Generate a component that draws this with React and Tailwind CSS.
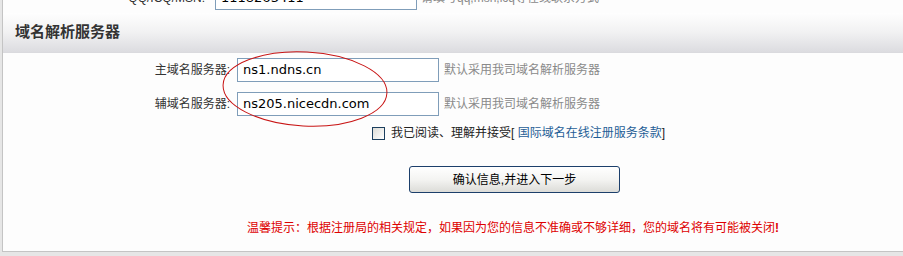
import React from "react";

const cjk = { fontFamily: '"Liberation Sans", "Noto Sans CJK SC", sans-serif' };

const Field = ({ label, value, hint }) => (
	<div className="flex items-center h-[24px]">
		<div className="w-[228px] text-right text-[12px] text-[#333] pr-[1px]">{label}</div>
		<div className="ml-[6px] w-[202px] h-[24px] border border-[#7f9db9] bg-white flex items-center pl-[5px] text-[13px] text-black" style={{ fontFamily: '"DejaVu Sans", sans-serif' }}>
			{value}
		</div>
		<div className="ml-[5px] text-[12px] text-[#8a8a8a]">{hint}</div>
	</div>
);

export default function App() {
	return (
		<div className="relative w-[903px] h-[256px] overflow-hidden bg-[#e6e6e6]" style={cjk}>
			<div className="ml-[2px] h-[252px] border-l border-b border-[#c4c4c4] bg-[#fdfdfd] flex flex-col">
				{/* previous row, cut off at top */}
				<div className="h-[13px] overflow-hidden">
					<div className="-mt-[14px] flex items-center h-[24px]">
						<div className="w-[202px] text-right text-[12px] text-[#333]">QQ/ICQ/MSN:</div>
						<div className="ml-[10px] w-[202px] h-[24px] border border-[#7f9db9] bg-white flex items-center pl-[5px] text-[13px]" style={{ fontFamily: '"DejaVu Sans", sans-serif' }}>
							1118263411
						</div>
						<div className="ml-[4px] text-[12px] text-[#8a8a8a]">请填写qq,msn,icq等在线联系方式</div>
					</div>
				</div>

				<div className="h-[40px] flex items-center pl-[12px] bg-gradient-to-b from-[#fefefe] via-[#f1f1f2] to-[#dcdce0] border-b border-[#dadade]">
					<span className="text-[15px] font-bold text-[#333]">域名解析服务器</span>
				</div>

				<div className="flex flex-col pt-[5px]">
					<Field label="主域名服务器:" value="ns1.ndns.cn" hint="默认采用我司域名解析服务器" />
					<div className="h-[10px]" />
					<Field label="辅域名服务器:" value="ns205.nicecdn.com" hint="默认采用我司域名解析服务器" />

					<div className="flex items-center mt-[10px] pl-[369px] h-[14px] text-[12px] text-[#222]">
						<span className="w-[13px] h-[13px] border border-[#1c3f5e] bg-gradient-to-br from-[#dcdcd7] to-white" />
						<span className="ml-[6px]">
							我已阅读、理解并接受[ <span className="text-[#1f5d96]">国际域名在线注册服务条款</span>]
						</span>
					</div>

					<div className="mt-[26px] pl-[406px]">
						<button className="w-[211px] h-[27px] rounded-[3px] border border-[#1c3f6b] bg-gradient-to-b from-white via-[#f4f4f2] to-[#dcdcd8] text-[12px] text-black">
							确认信息,并进入下一步
						</button>
					</div>

					<div className="mt-[26px] pl-[244px] text-[12px] text-[#dd0000]">
						温馨提示：根据注册局的相关规定，如果因为您的信息不准确或不够详细，您的域名将有可能被关闭<span className="font-bold">!</span>
					</div>
				</div>
			</div>

			<svg className="absolute left-0 top-0 pointer-events-none" width="903" height="256">
				<ellipse cx="305" cy="89" rx="82" ry="37" fill="none" stroke="#c81414" strokeWidth="1" transform="rotate(3 305 89)" />
			</svg>
		</div>
	);
}
